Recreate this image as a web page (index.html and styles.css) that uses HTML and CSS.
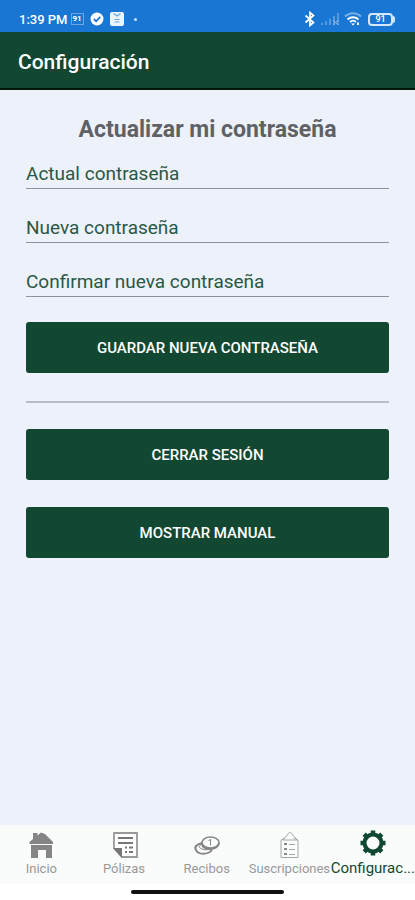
FILE: index.html
```html
<!DOCTYPE html>
<html lang="es">
<head>
    <meta charset="UTF-8">
    <meta name="viewport" content="width=device-width, initial-scale=1.0">
    <title>Configuración</title>
    <link rel="stylesheet" href="styles.css">
</head>
<body>

<div class="status-bar">
    <div class="status-left">
        <span class="clock">1:39 PM</span>
        <span class="badge">91</span>
        <svg width="14" height="14" viewBox="0 0 14 14">
            <circle cx="7" cy="7" r="6.5" fill="#fff"/>
            <path d="M3.8 7l2.3 2.3 4.2-4.4" fill="none" stroke="#1976d2" stroke-width="1.8"/>
        </svg>
        <svg width="14" height="14" viewBox="0 0 14 14">
            <rect width="14" height="14" rx="2" fill="#eaf4ff"/>
            <path d="M3.5 1.5L7 4l3.5-2.5M4.5 7.5h5M4.5 10h5" fill="none" stroke="#6ba6e2" stroke-width="1.2"/>
        </svg>
        <span class="dot"></span>
    </div>
    <div class="status-right">
        <svg width="12" height="16" viewBox="0 0 12 16">
            <path d="M1.5 4.5l8 7L6 14.5v-13l3.5 3-8 7" fill="none" stroke="#fff" stroke-width="1.7"/>
        </svg>
        <svg width="20" height="14" viewBox="0 0 20 14">
            <path d="M2 11v2M6 9v4M10 6.5v6.5M14 4v9M18 1v12" stroke="#5698de" stroke-width="2"/>
            <path d="M13 8l5 5M18 8l-5 5" stroke="#8dbbea" stroke-width="1"/>
        </svg>
        <svg width="18" height="14" viewBox="0 0 18 14">
            <path d="M1 4.5c4.5-4.3 11.5-4.3 16 0" fill="none" stroke="#78afe8" stroke-width="2"/>
            <path d="M3.5 7.5c3.2-3 7.800-3 11 0M6 10c1.8-1.6 4.2-1.6 6 0" fill="none" stroke="#fff" stroke-width="1.8"/>
            <path d="M9 13.5l-2-2h4zM13 10.5h2V13h-2z" fill="#fff"/>
        </svg>
        <div class="battery">
            <span class="battery-level">91</span>
            <span class="battery-tip"></span>
        </div>
    </div>
</div>

<header>
    <h1>Configuración</h1>
</header>

<main>
    <form class="password-form">
        <h2>Actualizar mi contraseña</h2>
        <input type="password" id="actual" placeholder="Actual contraseña" aria-label="Actual contraseña">
        <input type="password" id="nueva" placeholder="Nueva contraseña" aria-label="Nueva contraseña">
        <input type="password" id="confirmar" placeholder="Confirmar nueva contraseña" aria-label="Confirmar nueva contraseña">
        <button type="button" class="btn">GUARDAR NUEVA CONTRASEÑA</button>
    </form>
    <hr>
    <div class="actions">
        <button type="button" class="btn">CERRAR SESIÓN</button>
        <button type="button" class="btn">MOSTRAR MANUAL</button>
    </div>
</main>

<nav class="tabs">
    <a href="#inicio" class="tab">
        <svg width="28" height="28" viewBox="0 0 28 28" fill="#858585">
            <path d="M2.500 13v-2L6 8V2h4.500v2.500L14 1.500l4 1.500 8 8v2z"/>
            <path d="M4 14h21v13h-6v-8h-8v8H4z"/>
        </svg>
        <span>Inicio</span>
    </a>
    <a href="#polizas" class="tab">
        <svg width="28" height="28" viewBox="0 0 28 28">
            <path d="M4 17V2h23v24H12z" fill="#fff" stroke="#999" stroke-width="1.8"/>
            <path d="M3 17h9v10z" fill="#777"/>
            <path d="M8 7h15M8 12h15M15 16.500h2M19 16.500h4M15 21h2M19 21h4" stroke="#777" stroke-width="2"/>
        </svg>
        <span>Pólizas</span>
    </a>
    <a href="#recibos" class="tab">
        <svg width="28" height="28" viewBox="0 0 28 28" fill="none" stroke="#858585">
            <path d="M9 12c-5 1-8 4-6 7 2 5 12 5 16 0" stroke-width="2"/>
            <path d="M9 13c-4 2-3 4 0 5 3 1 5 1 8 0" stroke-width="1"/>
            <ellipse cx="17.5" cy="11.5" rx="8.5" ry="5.500" stroke-width="1.6"/>
            <path d="M9 13c1 7 16 7 17-1" stroke-width="2"/>
            <path d="M15.5 9.5l2-1v6" stroke-width="1"/>
        </svg>
        <span>Recibos</span>
    </a>
    <a href="#suscripciones" class="tab">
        <svg width="28" height="28" viewBox="0 0 28 28" fill="none" stroke="#a5a5a5">
            <path d="M10 7L6 9v17.500h17V9l-4-2M8 9l5-6c1-2 3-2 4 0l5 6z"/>
            <path d="M9 13h3M9 18h3M9 23h3" stroke="#888" stroke-width="2"/>
            <path d="M14 13.500h6M14 18.500h6M14 23.500h6"/>
        </svg>
        <span>Suscripciones</span>
    </a>
    <a href="#configuracion" class="tab active">
        <svg width="28" height="28" viewBox="0 0 28 28" stroke="#124832" fill="none">
            <circle cx="14" cy="14" r="8.5" stroke-width="4"/>
            <path d="M14 1.500v4M14 22.500v4M1.500 14h4M22.500 14h4M5.200 5.200l3 3M19.800 19.800l3 3M5.200 22.800l3-3M19.800 8.200l3-3" stroke-width="4.500"/>
        </svg>
        <span>Configurac...</span>
    </a>
</nav>

<footer class="gesture-bar">
    <div class="handle"></div>
</footer>

</body>
</html>
```
FILE: styles.css
```css
* {
    box-sizing: border-box;
}
body {
    font-family: Roboto, sans-serif;
    background-color: #edf1fa;
    margin: 0;
    min-height: 100vh;
    display: flex;
    flex-direction: column;
}
.status-bar {
    background-color: #1976d2;
    color: #fff;
    height: 32px;
    padding: 7px 20px 0 19px;
    display: flex;
    justify-content: space-between;
}
.status-left,
.status-right {
    display: flex;
    align-items: center;
    height: 24px;
}
.status-left {
    gap: 6px;
}
.status-right {
    gap: 4px;
}
.clock {
    font-size: 13px;
    font-weight: 500;
}
.badge {
    border: 1px solid #6ba6e2;
    width: 13px;
    height: 12px;
    margin-left: -3px;
    font-size: 8px;
    line-height: 10px;
    font-weight: 700;
    text-align: center;
}
.dot {
    width: 3px;
    height: 3px;
    margin-left: 4px;
    border-radius: 50%;
    background-color: #cfe4f8;
}
.battery {
    display: flex;
    align-items: center;
    margin-left: 2px;
}
.battery-level {
    width: 25px;
    height: 13px;
    border: 2px solid #d5e8fb;
    border-radius: 4px;
    font-size: 9px;
    line-height: 9px;
    font-weight: 500;
    text-align: center;
}
.battery-tip {
    width: 2px;
    height: 7px;
    border-radius: 0 2px 2px 0;
    background-color: #d5e8fb;
}
header {
    background-color: #124832;
    color: #fff;
    height: 58px;
    padding: 0 18px;
    border-bottom: 2px solid #04150c;
    display: flex;
    align-items: center;
}
h1 {
    margin: 0;
    padding-top: 4px;
    font-size: 21px;
    font-weight: 500;
}
main {
    flex: 1;
    padding: 24px 26px;
}
.password-form {
    display: flex;
    flex-direction: column;
}
h2 {
    margin: 0 0 14px;
    color: #606166;
    font-size: 23px;
    line-height: 31px;
    font-weight: 700;
    text-align: center;
}
input {
    width: 100%;
    height: 30px;
    margin-bottom: 24px;
    padding: 0;
    border: none;
    border-bottom: 1px solid #8e9298;
    background: none;
    color: #124832;
    font-family: inherit;
    font-size: 19px;
}
input::placeholder {
    color: #124832;
    opacity: 0.9;
}
.btn {
    width: 100%;
    height: 51px;
    border: none;
    border-radius: 3px;
    background-color: #124832;
    color: #fff;
    font-family: inherit;
    font-size: 15px;
    font-weight: 500;
    cursor: pointer;
}
.password-form .btn {
    margin-top: 1px;
}
hr {
    height: 2px;
    margin: 28px 0 26px;
    border: none;
    background-color: #b7bdc9;
}
.actions {
    display: flex;
    flex-direction: column;
    gap: 27px;
}
.tabs {
    height: 59px;
    background-color: #fafbfb;
    display: grid;
    grid-template-columns: repeat(5, 1fr);
}
.tab {
    display: flex;
    flex-direction: column;
    align-items: center;
    padding-top: 6px;
    color: #999;
    font-size: 13px;
    line-height: 20px;
    text-decoration: none;
    white-space: nowrap;
}
.tab.active {
    padding-top: 4px;
    color: #124832;
    font-size: 15px;
    line-height: 22px;
}
.gesture-bar {
    height: 16px;
    padding-top: 6px;
    background-color: #fff;
}
.handle {
    width: 37%;
    height: 4px;
    margin: 0 auto;
    border-radius: 2px;
    background-color: #111;
}
```
